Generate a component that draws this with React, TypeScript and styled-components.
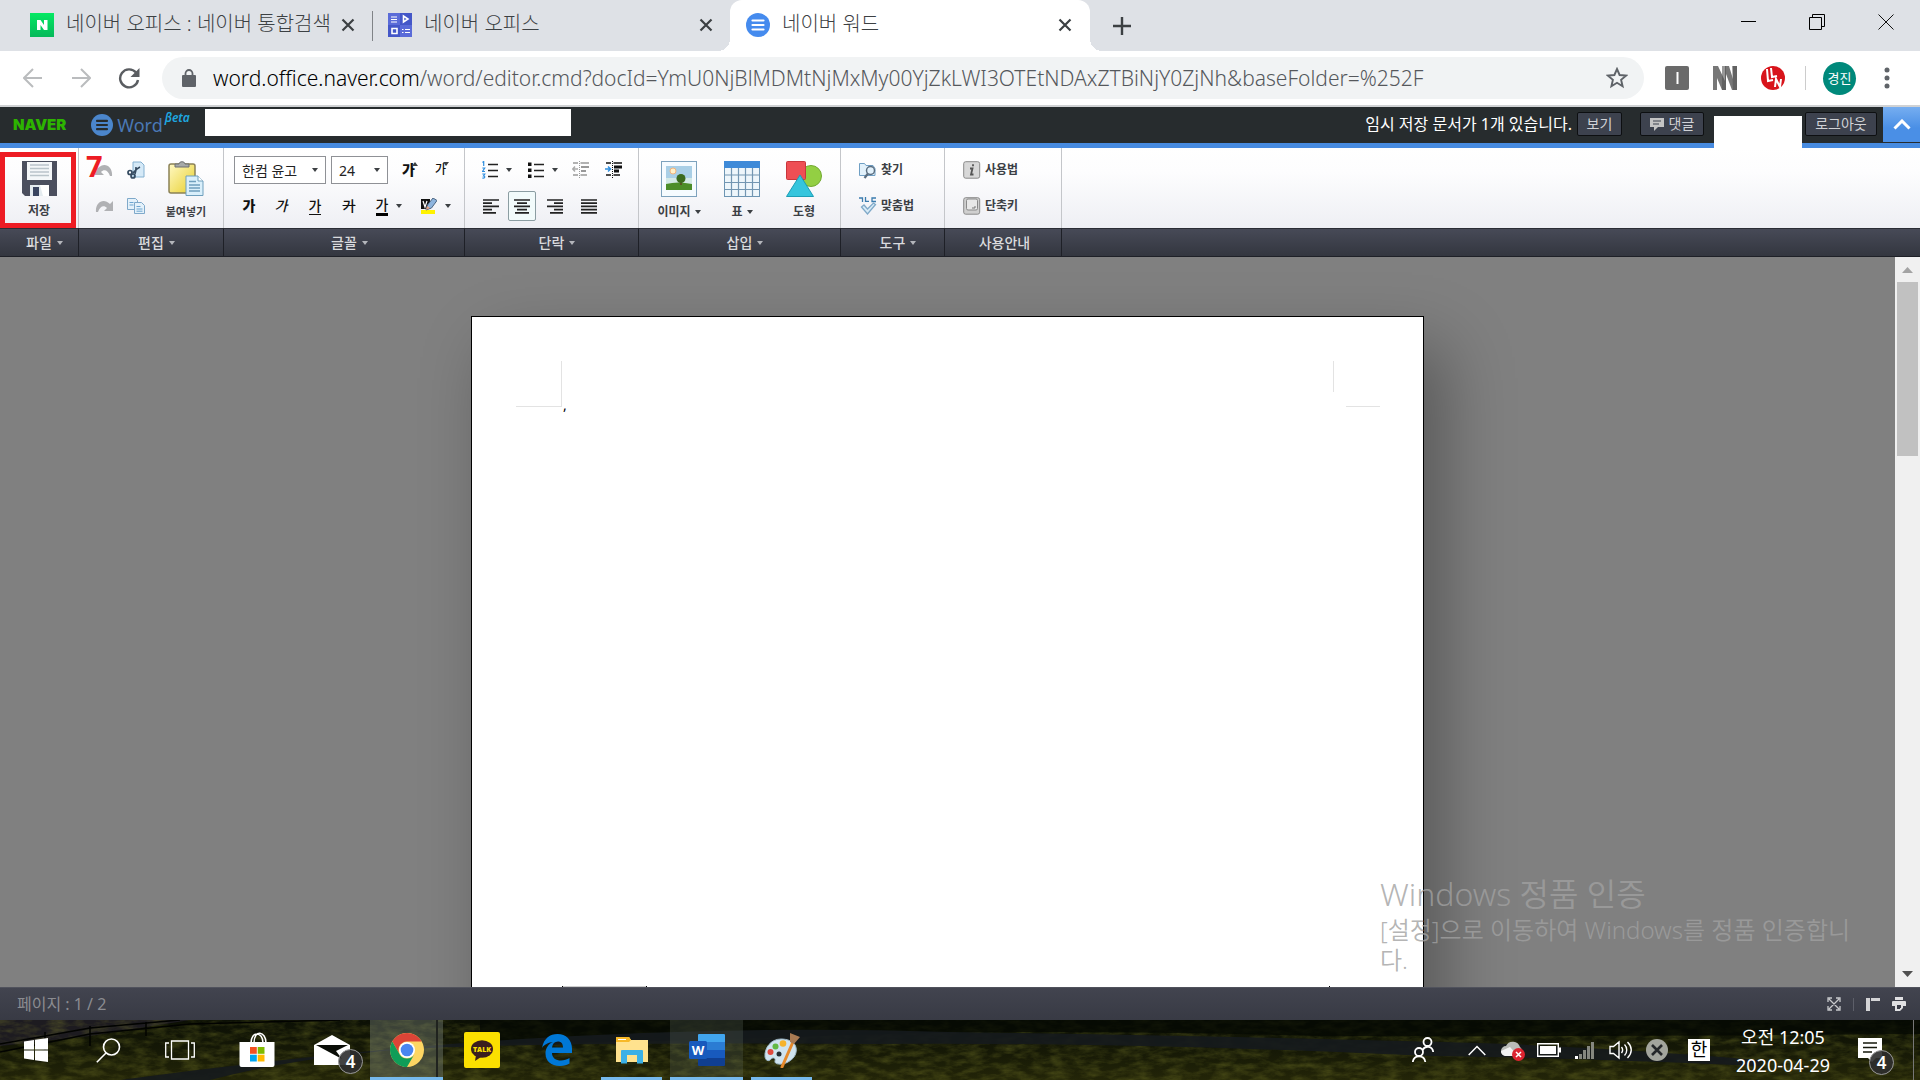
import React from 'react';
import styled, { createGlobalStyle, css } from 'styled-components';

const UI = `"Noto Sans", "Noto Sans CJK KR", sans-serif`;

const GlobalStyle = createGlobalStyle`
  *, *::before, *::after { box-sizing: border-box; }
  body { margin: 0; overflow: hidden; font-family: ${UI}; }
  button, select, input { font-family: inherit; margin: 0; }
  button { padding: 0; border: 0; background: none; color: inherit; cursor: pointer; }
  svg { display: block; flex: none; }
  a { color: inherit; text-decoration: none; }
`;

const Screen = styled.div`
  display: flex;
  flex-direction: column;
  height: 100vh;
  background: #808080;
`;

/* ---------- browser chrome ---------- */

const TabStrip = styled.header`
  display: flex;
  height: 51px;
  padding-left: 14px;
  background: #dee1e6;
`;

const TabList = styled.nav`
  display: flex;
`;

const Tab = styled.div<{ $active?: boolean; $divided?: boolean }>`
  position: relative;
  display: flex;
  align-items: center;
  width: 358px;
  padding: 0 17px 2px 16px;
  color: #3c4043;
  ${(p) => p.$divided && css`
    &::after {
      content: '';
      position: absolute;
      right: -1px;
      top: 11px;
      height: 30px;
      width: 1px;
      background: #808387;
    }
  `}
  ${(p) => p.$active && css`
    width: 360px;
    padding-right: 18px;
    background: #fff;
    border-radius: 12px 12px 0 0;
    &::before, &::after {
      content: '';
      position: absolute;
      bottom: 0;
      width: 12px;
      height: 12px;
    }
    &::before { left: -12px; background: radial-gradient(circle at 0 0, transparent 12px, #fff 12px); }
    &::after { right: -12px; background: radial-gradient(circle at 100% 0, transparent 12px, #fff 12px); }
  `}
`;

const TabTitle = styled.a`
  flex: 1;
  min-width: 0;
  margin-left: 12px;
  padding-bottom: 2px;
  overflow: hidden;
  white-space: nowrap;
  font-size: 20px;
  font-weight: 300;
  line-height: 28px;
`;

const PlainButton = styled.button<{ $w?: number }>`
  display: flex;
  align-items: center;
  justify-content: center;
  width: ${(p) => (p.$w ? `${p.$w}px` : 'auto')};
`;

const WindowButtons = styled.div`
  display: flex;
  height: 43px;
  margin-left: auto;
`;

const AddressRow = styled.div`
  display: flex;
  align-items: center;
  height: 56px;
  padding: 0 7px 0 9px;
  background: #fff;
  border-bottom: 2px solid #d0d2d4;
`;

const Omnibox = styled.div`
  flex: 1;
  display: flex;
  align-items: center;
  height: 42px;
  margin: 0 9px;
  padding: 0 16px 0 19px;
  border-radius: 21px;
  background: #f1f3f4;
`;

const Url = styled.div`
  flex: 1;
  margin-left: 16px;
  font-family: "Noto Sans", sans-serif;
  font-size: 21px;
  font-weight: 300;
  line-height: 30px;
  white-space: nowrap;
  color: #55585c;
  b { font-weight: 300; color: #000; }
`;

const Extensions = styled.div`
  display: flex;
  align-items: center;
`;

const ChromeDivider = styled.span`
  width: 1px;
  height: 24px;
  margin: 0 17px 0 8px;
  background: #ccc;
`;

const Avatar = styled.button`
  width: 33px;
  height: 33px;
  margin-right: 5px;
  border-radius: 50%;
  background: #00897b;
  color: #fff;
  font-size: 13px;
  line-height: 33px;
`;

/* ---------- editor header ---------- */

const AppBar = styled.header`
  display: flex;
  align-items: flex-start;
  height: 41px;
  background: #272c2e;
  border-bottom: 5px solid #478be0;
  position: relative;
  z-index: 1;
`;

const Brand = styled.a`
  margin-left: 13px;
  color: #2db400;
  font: 900 15px/36px "Inter", "Noto Sans", sans-serif;
`;

const WordBrand = styled.a`
  display: flex;
  align-items: center;
  height: 36px;
  margin-left: 25px;
  color: #4a78b5;
  font-size: 18px;
  span { margin-left: 4px; }
  sup {
    align-self: flex-start;
    margin-left: 2px;
    font-size: 12px;
    line-height: 22px;
    font-weight: 600;
    font-style: italic;
    color: #1ea7e0;
  }
`;

const DocTitle = styled.input`
  width: 366px;
  height: 27px;
  margin: 2px 0 0 15px;
  padding: 0 8px;
  border: 0;
  background: #fff;
  font-size: 14px;
`;

const AppBarRight = styled.div`
  display: flex;
  align-items: flex-start;
  margin-left: auto;
`;

const DraftNotice = styled.span`
  margin-right: 5px;
  color: #fff;
  font-size: 16px;
  line-height: 34px;
  white-space: nowrap;
`;

const DarkButton = styled.button<{ $w: number; $gap: number }>`
  display: flex;
  align-items: center;
  justify-content: center;
  gap: 5px;
  width: ${(p) => p.$w}px;
  height: 24px;
  margin: 5px ${(p) => p.$gap}px 0 0;
  border: 1px solid #0d0f11;
  border-radius: 2px;
  background: #3d424e;
  color: #d0d2d6;
  font-size: 14px;
  line-height: 20px;
`;

const AccountBox = styled.div`
  width: 88px;
  height: 33px;
  margin: 9px 3px 0 0;
  background: #fff;
`;

const FoldButton = styled.button`
  display: flex;
  align-items: center;
  justify-content: center;
  width: 37px;
  height: 35px;
  background: linear-gradient(#76aef0, #4a8fe6 60%);
`;

/* ---------- ribbon ---------- */

const Ribbon = styled.div`
  position: relative;
  display: flex;
  height: 109px;
`;

const Group = styled.section<{ $w?: number }>`
  display: flex;
  flex-direction: column;
  ${(p) => (p.$w ? `width: ${p.$w}px;` : 'flex: 1;')}
`;

const GroupBody = styled.div<{ $last?: boolean; $left?: number }>`
  display: flex;
  height: 80px;
  padding: 4px 0 0 ${(p) => p.$left || 0}px;
  background: linear-gradient(#fff, #fdfdfe 30%, #eeeff4);
  border-right: ${(p) => (p.$last ? 0 : 1)}px solid #c4c6ca;
`;

const GroupLabel = styled.button<{ $last?: boolean; $menu?: boolean }>`
  display: flex;
  align-items: center;
  justify-content: center;
  gap: 5px;
  height: 29px;
  width: 100%;
  padding-left: ${(p) => (p.$menu ? 11 : 3)}px;
  border-top: 1px solid #2b2d36;
  border-bottom: 1px solid #1e2027;
  border-right: ${(p) => (p.$last ? 0 : 1)}px solid #1e2027;
  background: linear-gradient(#474a57, #33363f);
  color: #dadbde;
  font-size: 14px;
  font-weight: 500;
  line-height: 20px;
`;

const Caret = styled.i<{ $color?: string }>`
  flex: none;
  width: 0;
  height: 0;
  border: 3px solid transparent;
  border-top: 4px solid ${(p) => p.$color || '#3c4043'};
  border-bottom: 0;
`;

const BigButton = styled.button<{ $w: number }>`
  display: flex;
  flex-direction: column;
  align-items: center;
  gap: 6px;
  width: ${(p) => p.$w}px;
  height: 74px;
  padding-top: 9px;
  color: #3c3f45;
  font-size: 12px;
  font-weight: 700;
  line-height: 18px;
  white-space: nowrap;
`;

const BigLabel = styled.span<{ $small?: boolean }>`
  display: flex;
  align-items: center;
  gap: 4px;
  font-size: ${(p) => (p.$small ? 11 : 12)}px;
`;

const Stack = styled.div<{ $w?: number }>`
  display: flex;
  flex-direction: column;
  width: ${(p) => (p.$w ? `${p.$w}px` : 'auto')};
`;

const ToolRow = styled.div`
  display: flex;
  align-items: center;
  height: 36px;
`;

const Tool = styled.button<{ $w: number; $on?: boolean }>`
  display: flex;
  align-items: center;
  justify-content: center;
  gap: 8px;
  width: ${(p) => p.$w}px;
  height: 30px;
  border: 1px solid ${(p) => (p.$on ? '#8b9da2' : 'transparent')};
  border-radius: 2px;
  background: ${(p) => (p.$on ? '#f2fbfb' : 'none')};
`;

const SelectBox = styled.label<{ $w: number }>`
  position: relative;
  width: ${(p) => p.$w}px;
  margin-right: 5px;
  select {
    appearance: none;
    display: block;
    width: 100%;
    height: 28px;
    padding: 0 18px 0 7px;
    border: 1px solid #8f9196;
    border-radius: 0;
    background: #fff;
    color: #222;
    font-size: 14px;
  }
  i { position: absolute; right: 8px; top: 12px; }
`;

const Glyph = styled.span<{ $kind?: string }>`
  color: #111;
  font-size: ${(p) => (p.$kind === 'small' ? 12 : 14)}px;
  line-height: 16px;
  font-weight: ${(p) => (p.$kind === 'bold' ? 900 : 500)};
  ${(p) => p.$kind === 'italic' && 'font-style: italic;'}
  ${(p) => p.$kind === 'under' && 'border-bottom: 1px solid #111;'}
  ${(p) => p.$kind === 'strike' && 'text-decoration: line-through;'}
  ${(p) => p.$kind === 'color' && 'border-bottom: 3px solid #000;'}
`;

const Sized = styled.span`
  display: flex;
  align-items: center;
  i { align-self: flex-start; margin-left: -3px; }
`;

const CaretUp = styled(Caret)`
  transform: rotate(180deg);
`;

const ToolLink = styled.button`
  display: flex;
  align-items: center;
  gap: 4px;
  height: 36px;
  color: #3c3f45;
  font-size: 12px;
  font-weight: 700;
  line-height: 18px;
`;

const SaveHighlight = styled.div`
  position: absolute;
  left: 0;
  top: 4px;
  width: 76px;
  height: 76px;
  border: 5px solid #ed1c24;
  pointer-events: none;
`;

const StepNumber = styled.span`
  position: absolute;
  left: 86px;
  top: 2px;
  color: #ed1c24;
  font-size: 29px;
  font-weight: 700;
  line-height: 32px;
`;

/* ---------- document ---------- */

const Workspace = styled.main`
  position: relative;
  display: flex;
  flex: 1;
  min-height: 0;
  overflow: hidden;
`;

const Canvas = styled.div`
  flex: 1;
  overflow: hidden;
  padding-top: 59px;
`;

const Paper = styled.article`
  position: relative;
  width: 953px;
  height: 1347px;
  margin: 0 auto;
  padding: 80px 91px;
  border: 1px solid #000;
  background: #fff;
  box-shadow: 20px 30px 65px rgba(0, 0, 0, 0.32);
  font-size: 14px;
  line-height: 16px;
`;

const Mark = styled.span<{ $x: number; $y: number; $w: number; $h: number; $c?: string }>`
  position: absolute;
  left: ${(p) => p.$x}px;
  top: ${(p) => p.$y}px;
  width: ${(p) => p.$w}px;
  height: ${(p) => p.$h}px;
  background: ${(p) => p.$c || '#e3e3e3'};
`;

const Scrollbar = styled.div`
  display: flex;
  flex-direction: column;
  align-items: center;
  width: 25px;
  background: #f0f0f0;
`;

const ScrollThumb = styled.div`
  width: 21px;
  height: 174px;
  margin-bottom: auto;
  background: #c1c1c1;
`;

const Watermark = styled.aside`
  position: absolute;
  right: 70px;
  bottom: 12px;
  width: 470px;
  color: rgba(161, 161, 161, 0.8);
  white-space: nowrap;
  pointer-events: none;
  h2 { margin: 0; font-size: 32px; font-weight: 350; line-height: 42px; }
  p { margin: 0; font-size: 24px; font-weight: 350; line-height: 30px; }
`;

const StatusBar = styled.footer`
  display: flex;
  align-items: center;
  height: 33px;
  padding: 0 14px 0 17px;
  border-top: 1px solid #50525c;
  background: linear-gradient(#42444f, #383a44);
  color: #8b8c91;
  font-size: 16px;
  line-height: 22px;
`;

const StatusTools = styled.div`
  display: flex;
  align-items: center;
  gap: 12px;
  margin-left: auto;
`;

const StatusDivider = styled.span`
  width: 1px;
  height: 13px;
  background: #5d5f69;
`;

/* ---------- taskbar ---------- */

const Taskbar = styled.nav`
  position: relative;
  display: flex;
  height: 60px;
  background: #0c0e06;
  color: #fff;
`;

const Wallpaper = styled.svg`
  position: absolute;
  inset: 0;
  width: 100%;
  height: 100%;
`;

const StartArea = styled.div`
  position: relative;
  display: flex;
  margin-right: 4px;
`;

const Pinned = styled.div`
  position: relative;
  display: flex;
  gap: 2px;
`;

const TaskButton = styled.button<{ $w?: number; $line?: 'short' | 'full'; $lit?: string }>`
  position: relative;
  display: flex;
  align-items: center;
  justify-content: center;
  width: ${(p) => p.$w || 73}px;
  background: ${(p) => p.$lit || 'none'};
  ${(p) => p.$line && css`
    &::after {
      content: '';
      position: absolute;
      bottom: 0;
      left: ${p.$line === 'full' ? 0 : 6}px;
      right: ${p.$line === 'full' ? 0 : 6}px;
      height: 3px;
      background: #76b9ed;
    }
  `}
`;

const StackEdge = styled.span`
  position: absolute;
  top: 0;
  bottom: 0;
  right: 5px;
  width: 2px;
  background: #20231f;
`;

const Badge = styled.span<{ $x: number; $y: number }>`
  position: absolute;
  left: ${(p) => p.$x}px;
  top: ${(p) => p.$y}px;
  width: 25px;
  height: 25px;
  border: 1px solid #999;
  border-radius: 50%;
  background: rgba(45, 45, 45, 0.9);
  color: #fff;
  font-size: 17px;
  font-weight: 600;
  line-height: 23px;
  text-align: center;
`;

const Tray = styled.div`
  position: relative;
  display: flex;
  margin-left: auto;
`;

const Clock = styled.button`
  width: 120px;
  padding-top: 2px;
  color: #fff;
  font-size: 18px;
  line-height: 28px;
  text-align: center;
  time { display: block; }
`;

const Language = styled.span`
  width: 22px;
  height: 22px;
  background: #fff;
  color: #000;
  font-size: 18px;
  line-height: 21px;
`;

const ShowDesktop = styled.button`
  width: 7px;
  border-left: 1px solid #777;
`;

/* ---------- icons ---------- */

const Cross = () => (
  <svg width="14" height="14" viewBox="0 0 14 14" stroke="#3c4043" strokeWidth="2.2"><path d="M1.5 1.5l11 11M12.5 1.5l-11 11" /></svg>
);

const WordMark = ({ size, bg, fg }: { size: number; bg: string; fg: string }) => (
  <svg width={size} height={size} viewBox="0 0 24 24"><circle cx="12" cy="12" r="12" fill={bg} /><path d="M6.500 7.500h11M6.500 12h11M6.500 16.500h11" stroke={fg} strokeWidth="2.200" strokeLinecap="round" /></svg>
);

const Floppy = () => (
  <svg width="35" height="35" viewBox="0 0 35 35">
    <path d="M0 0h35v35H3l-3-3z" fill="#4b4f5e" />
    <path d="M5 1h25v18H5z" fill="#f4f7f9" />
    <path d="M8 4h19M8 7.500h19M8 11h19M8 14.500h19" stroke="#b9c4ca" strokeWidth="1.500" />
    <path d="M8 24h19v11H8z" fill="#e4ebef" /><path d="M11 26h6v9h-6z" fill="#3a4560" />
    <path d="M18 24h9v11h-6z" fill="#fff" />
  </svg>
);

const Curl = ({ flip }: { flip?: boolean }) => (
  <svg width="18" height="14" viewBox="0 0 18 14" fill="#b0b1b4">
    <path transform={flip ? 'matrix(-1 0 0 1 18 0)' : undefined} d="M0 2v10h9L6 9c3-3 7-2 9 4h2C18 4 10-2 3 5z" />
  </svg>
);

const Cut = () => (
  <svg width="18" height="18" viewBox="0 0 18 18">
    <path d="M6 1h8l3 3v12H6z" fill="#d5e9f7" stroke="#84b0d0" />
    <path d="M13 6c-4 2-5 4-7 6M9 6c0 3 0 5-1 7" stroke="#344a60" strokeWidth="1.600" fill="none" />
    <g fill="none" stroke="#344a60" strokeWidth="1.700"><circle cx="3" cy="11.500" r="2" /><circle cx="6" cy="15" r="2" /></g>
  </svg>
);

const Copy = () => (
  <svg width="18" height="18" viewBox="0 0 18 18" fill="#e4f1fa" stroke="#7fa9ca">
    <path d="M.5 1.500h8l2 2v9H.5z" /><path d="M7.500 5.500h7l3 3v8h-10z" />
    <path d="M2.500 5.500h4M2.500 8h4M9.500 9.500h4M9.500 12h6M9.500 14.200h6" stroke="#6da5d0" />
  </svg>
);

const Clipboard = () => (
  <svg width="36" height="36" viewBox="0 0 36 36">
    <defs><linearGradient id="clip" x2="1" y2="1"><stop stopColor="#fff9c4" /><stop offset="1" stopColor="#e8cf2c" /></linearGradient></defs>
    <rect x="1" y="3" width="26" height="29" rx="2" fill="url(#clip)" stroke="#8b8157" strokeWidth="1.500" />
    <path d="M7 6V3h4c0-3 6-3 6 0h4v3z" fill="#a7aaa9" stroke="#6c6f70" />
    <path d="M18 15h12l5 5v14.500H18z" fill="#d9effb" stroke="#6f9fbd" />
    <path d="M30 15v5h5" fill="#fff" stroke="#6f9fbd" />
    <path d="M21 20.500h7M21 24h11M21 27h11M21 30h11" stroke="#6f9fbd" strokeWidth="1.300" />
  </svg>
);

const Listing = ({ numbered }: { numbered?: boolean }) => (
  <svg width="16" height="18" viewBox="0 0 16 18">
    {numbered
      ? <path d="M.5 1.500l1.200-1V5M.3 7h2.400L.5 10.500h2.500M.3 13h2.500L1.500 15c2 0 1.500 2.500-1.200 2" fill="none" stroke="#2f8fe0" strokeWidth="1.200" />
      : <path d="M0 1.500h3.500V5H0zM0 7.500h3.500V11H0zM0 13.500h3.500V17H0z" fill="#111" />}
    <path d="M6 3.500h10M6 9.500h10M6 15.500h10" stroke="#222" strokeWidth="1.600" />
  </svg>
);

const Indent = ({ on }: { on?: boolean }) => (
  <svg width="18" height="18" viewBox="0 0 18 18" stroke={on ? '#111' : '#999'} strokeWidth="2">
    <path d="M1 2h5M8.500 2H17M1 14h5M8.500 14H15" strokeWidth="1.500" />
    <path d="M9 6h8M9 10h5" strokeWidth={on ? 3 : 2} />
    <path d="M7.500 0v18" strokeDasharray="1 1" strokeWidth="1" />
    <path d={on ? 'M0 8h5M3 5.500L5.500 8 3 10.500' : 'M6 8H1M3 5.500L.8 8 3 10.500'} fill="none" stroke={on ? '#2f8fe0' : '#aaa'} strokeWidth="1.500" />
  </svg>
);

const Align = ({ d }: { d: string }) => (
  <svg width="16" height="15" viewBox="0 0 16 15" stroke="#222" strokeWidth="1.700"><path d={d} /></svg>
);

const Marker = () => (
  <svg width="16" height="16" viewBox="0 0 16 16">
    <path d="M0 1h9v10H0z" fill="#111" /><path d="M2 3l2 6 2-6" stroke="#fff" fill="none" strokeWidth="1.200" />
    <path d="M0 12h14v4H0z" fill="#fff200" />
    <path d="M5 12l1.500-5L12 0l4 2.500-5.500 7.500z" fill="#8db4de" stroke="#4b6480" /><path d="M5 12l1-4 3 2z" fill="#e4a080" />
  </svg>
);

const Photo = () => (
  <svg width="36" height="36" viewBox="0 0 36 36">
    <rect x=".5" y=".5" width="35" height="35" fill="#f5fbff" stroke="#7da2bd" />
    <rect x="5" y="5" width="26" height="24" fill="#a9cfe6" /><path d="M5 17h26v6H5z" fill="#d3e9e6" />
    <circle cx="12" cy="10" r="3" fill="#fff0c8" stroke="#f3b37b" />
    <path d="M5 23q12-3 26 0v6H5z" fill="#4c8d29" /><path d="M20 18v6" stroke="#5b4422" strokeWidth="1.500" /><circle cx="20" cy="17.500" r="4.500" fill="#3a6a1d" />
  </svg>
);

const Grid = () => (
  <svg width="36" height="36" viewBox="0 0 36 36">
    <rect x=".5" y=".5" width="35" height="35" fill="#eef6fb" stroke="#6d95b3" /><path d="M0 0h36v7H0z" fill="#3e8ad8" />
    <path d="M7.500 7v29M14.500 7v29M21.500 7v29M28.500 7v29M0 14h36M0 21.500h36M0 28.500h36" stroke="#7396b2" strokeWidth="1.200" />
  </svg>
);

const Shapes = () => (
  <svg width="36" height="36" viewBox="0 0 36 36">
    <circle cx="25" cy="15" r="10.500" fill="#93cf43" stroke="#72a930" />
    <rect x=".5" y=".5" width="19" height="18" rx="1" fill="#ee4f54" stroke="#c8363c" />
    <path d="M14 14l13.500 21.500H.5z" fill="#35c5dd" stroke="#1c9db5" />
  </svg>
);

const FindIcon = () => (
  <svg width="18" height="18" viewBox="0 0 18 18" fill="#e2f1fb" stroke="#6f9fc4">
    <path d="M.5 14.500v-12h5l1.500 2h7l2 3v7z" /><circle cx="11.500" cy="9.500" r="4" stroke="#5b6e80" strokeWidth="1.500" /><path d="M9 12.500L5.500 17" stroke="#5b6e80" strokeWidth="2.200" />
  </svg>
);

const SpellIcon = () => (
  <svg width="18" height="18" viewBox="0 0 18 18" fill="none" stroke="#3b7cae" strokeWidth="1.300">
    <path d="M0 1h3.500v4M6.500 0v4.300H10M17 1h-4v3.500h4" /><path d="M2.500 10l2.500-2 3.500 4 6-6 2 1.500-8 9.500z" fill="#d8ebf7" stroke="#7fa9c8" />
  </svg>
);

const InfoIcon = () => (
  <svg width="18" height="18" viewBox="0 0 18 18">
    <rect x=".7" y=".7" width="16" height="16.500" rx="2" fill="#d8d8d8" stroke="#8a8a8a" /><path d="M10 3.200v2M7 7.500h2.500L8 13.500h2.500" stroke="#555" strokeWidth="1.800" fill="none" />
  </svg>
);

const KeyIcon = () => (
  <svg width="18" height="18" viewBox="0 0 18 18" fill="#cfcfcf" stroke="#8a8a8a">
    <rect x=".7" y=".7" width="16" height="16.500" rx="2" /><rect x="3.500" y="2" width="11" height="11" rx="1.500" fill="#e8e8e8" /><path d="M9 11h3V9" stroke="#777" fill="none" />
  </svg>
);

const ALIGN = {
  left: 'M0 1h16M0 4.200h9M0 7.400h16M0 10.600h9M0 13.800h13',
  center: 'M0 1h16M3 4.200h10M0 7.400h16M3 10.600h10M1 13.800h14',
  right: 'M0 1h16M7 4.200h9M0 7.400h16M7 10.600h9M3 13.800h13',
  both: 'M0 1h16M0 4.200h16M0 7.400h16M0 10.600h16M0 13.800h16',
};

const Landscape = () => (
  <Wallpaper viewBox="0 0 1920 60" preserveAspectRatio="none" aria-hidden="true">
    <defs>
      <linearGradient id="field" x2="0" y2="1"><stop stopColor="#0c1005" /><stop offset=".5" stopColor="#151806" /><stop offset="1" stopColor="#232508" /></linearGradient>
      <filter id="grass" x="0" y="0" width="100%" height="100%">
        <feTurbulence type="fractalNoise" baseFrequency=".06 .16" numOctaves="4" seed="4" />
        <feColorMatrix values="0 0 0 0 .26  0 0 0 0 .27  0 0 0 0 .03  1.400 0 0 0 -.5" />
      </filter>
    </defs>
    <rect width="1920" height="60" fill="url(#field)" />
    <path d="M0 0h190L90 16 0 26z" fill="#1d1b20" />
    <rect width="1920" height="60" filter="url(#grass)" opacity=".45" />
    <path d="M480 0h1440v14q-330 3-600 2-280-8-500 0-160 6-340 8z" fill="#040803" opacity=".75" />
    <path d="M120 60q160-22 330-36 260-20 500-12 300 4 560 12 130 6 250 16v6q-180-8-330-10-300-14-560-12-300-2-440 4-120 6-220 32z" fill="#15191d" opacity=".9" />
    <path d="M0 32L90 14 190 4 340 0M0 24L90 8 180 0M45 12v18M90 6v20M146 2v14" stroke="#020301" strokeWidth="1.500" fill="none" />
  </Wallpaper>
);

type GroupProps = { w?: number; label?: string; left?: number; caret?: boolean; children?: React.ReactNode };

const RibbonGroup = ({ w, label, left, caret = true, children }: GroupProps) => (
  <Group $w={w}>
    <GroupBody $left={left} $last={!w}>{children}</GroupBody>
    <GroupLabel $last={!w} $menu={caret}>{label}{label && caret && <Caret $color="#b4b6bb" />}</GroupLabel>
  </Group>
);

export default function App() {
  return (
    <Screen>
      <GlobalStyle />
      <TabStrip>
        <TabList>
          <Tab $divided>
            <svg width="24" height="24" viewBox="0 0 24 24"><defs><linearGradient id="nv" x2="0" y2="1"><stop stopColor="#04e963" /><stop offset="1" stopColor="#06b85a" /></linearGradient></defs><path d="M0 0h24v24H0z" fill="url(#nv)" /><path d="M7 7h3.500l3.500 5V7h3.500v10H14l-3.500-5v5H7z" fill="#fff" /></svg>
            <TabTitle href="#">네이버 오피스 : 네이버 통합검색</TabTitle>
            <PlainButton aria-label="탭 닫기"><Cross /></PlainButton>
          </Tab>
          <Tab>
            <svg width="24" height="24" viewBox="0 0 24 24"><path d="M0 0h24v24H0z" fill="#4457c8" /><path d="M0 0h12v12H0zM12 12h12v12H12z" fill="#5a6bd8" /><path d="M3 4h6M3 6.500h6M3 9h6M14 16.500h1.500M17 16.500h5M14 19.500h1.500M17 19.500h5" stroke="#fff" strokeWidth="1.200" /><path d="M15.500 3v6l4.500-3zM4 15.500h5v5H4z" fill="none" stroke="#fff" strokeWidth="1.600" /></svg>
            <TabTitle href="#">네이버 오피스</TabTitle>
            <PlainButton aria-label="탭 닫기"><Cross /></PlainButton>
          </Tab>
          <Tab $active>
            <WordMark size={24} bg="#458bee" fg="#fff" />
            <TabTitle href="#">네이버 워드</TabTitle>
            <PlainButton aria-label="탭 닫기"><Cross /></PlainButton>
          </Tab>
        </TabList>
        <PlainButton $w={64} aria-label="새 탭"><svg width="18" height="18" viewBox="0 0 18 18" stroke="#3c4043" strokeWidth="2.400"><path d="M9 0v18M0 9h18" /></svg></PlainButton>
        <WindowButtons>
          <PlainButton $w={69} aria-label="최소화"><svg width="15" height="15" viewBox="0 0 15 15" stroke="#000"><path d="M0 7.500h15" /></svg></PlainButton>
          <PlainButton $w={68} aria-label="이전 크기로"><svg width="16" height="16" viewBox="0 0 16 16" stroke="#000" fill="none"><path d="M.5 3.500h12v12H.5zM3.500 3.500v-3h12v12h-3" /></svg></PlainButton>
          <PlainButton $w={69} aria-label="닫기"><svg width="16" height="16" viewBox="0 0 16 16" stroke="#111"><path d="M.5.5l15 15M15.500.5l-15 15" /></svg></PlainButton>
        </WindowButtons>
      </TabStrip>

      <AddressRow>
        <PlainButton $w={48} aria-label="뒤로"><svg width="20" height="20" viewBox="0 0 20 20" stroke="#babcbe" strokeWidth="2" fill="none"><path d="M19 10H2M10 1l-9 9 9 9" /></svg></PlainButton>
        <PlainButton $w={48} aria-label="앞으로"><svg width="20" height="20" viewBox="0 0 20 20" stroke="#babcbe" strokeWidth="2" fill="none"><path d="M1 10h17M10 1l9 9-9 9" /></svg></PlainButton>
        <PlainButton $w={48} aria-label="새로고침"><svg width="22" height="22" viewBox="0 0 22 22"><path d="M18 5.500A9 9 0 1 0 20 13" stroke="#5a5d61" strokeWidth="2.400" fill="none" /><path d="M21.500 1v9h-9z" fill="#5a5d61" /></svg></PlainButton>
        <Omnibox>
          <svg width="16" height="18" viewBox="0 0 16 18"><path d="M2 7h12v10H2z" fill="#5f6368" stroke="#5f6368" strokeLinejoin="round" strokeWidth="2" /><path d="M4.500 7V4.500a3.500 3.500 0 0 1 7 0V7" fill="none" stroke="#5f6368" strokeWidth="1.800" /></svg>
          <Url><b>word.office.naver.com</b>/word/editor.cmd?docId=YmU0NjBlMDMtNjMxMy00YjZkLWI3OTEtNDAxZTBiNjY0ZjNh&amp;baseFolder=%252F</Url>
          <PlainButton aria-label="북마크"><svg width="22" height="22" viewBox="0 0 22 22" fill="none" stroke="#5f6368" strokeWidth="1.900"><path d="M11 2l2.600 6 6.400.600-4.900 4.200 1.500 6.400L11 15.800l-5.600 3.400 1.500-6.400L2 8.600 8.400 8z" /></svg></PlainButton>
        </Omnibox>
        <Extensions>
          <PlainButton $w={48} aria-label="확장 프로그램 I"><svg width="24" height="24" viewBox="0 0 24 24"><rect width="24" height="24" rx="2" fill="#6a6a6a" /><path d="M12.500 6v12" stroke="#fff" strokeWidth="2" /></svg></PlainButton>
          <PlainButton $w={48} aria-label="확장 프로그램 N"><svg width="24" height="24" viewBox="0 0 24 24"><path d="M0 0h5l7 15V0h4l4 13V0h4v24h-5L13 8v16H9L4 12v12H0z" fill="#777" /><path d="M9 0h4v24H9zM19 0h5v24h-4z" fill="#555" opacity=".6" /></svg></PlainButton>
          <PlainButton $w={48} aria-label="확장 프로그램 LN"><svg width="24" height="24" viewBox="0 0 24 24"><circle cx="12" cy="12" r="12" fill="#d8141b" /><path d="M6 3l1 12 5-1M10 2l1 9 5-1" stroke="#fff" strokeWidth="2" fill="none" /><path d="M14 21l1-8 4 8 1-8" stroke="#fff" strokeWidth="2" fill="none" /></svg></PlainButton>
          <ChromeDivider />
          <Avatar>경진</Avatar>
          <PlainButton $w={52} aria-label="메뉴"><svg width="6" height="24" viewBox="0 0 6 24" fill="#5f6368"><circle cx="3" cy="4" r="2.500" /><circle cx="3" cy="12" r="2.500" /><circle cx="3" cy="20" r="2.500" /></svg></PlainButton>
        </Extensions>
      </AddressRow>

      <AppBar>
        <Brand href="#">NAVER</Brand>
        <WordBrand href="#"><WordMark size={22} bg="#4b86cc" fg="#272c2e" /><span>Word</span><sup>βeta</sup></WordBrand>
        <DocTitle aria-label="문서 제목" />
        <AppBarRight>
          <DraftNotice>임시 저장 문서가 1개 있습니다.</DraftNotice>
          <DarkButton $w={45} $gap={18}>보기</DarkButton>
          <DarkButton $w={64} $gap={10}>
            <svg width="14" height="13" viewBox="0 0 14 13"><path d="M0 0h14v9H8l-4 4V9H0z" fill="#c4c4c4" /><path d="M3 3h8M3 6h6" stroke="#3d424e" /></svg>댓글
          </DarkButton>
          <AccountBox />
          <DarkButton $w={72} $gap={6}>로그아웃</DarkButton>
          <FoldButton aria-label="메뉴 접기"><svg width="18" height="11" viewBox="0 0 18 11"><path d="M1.500 9.500L9 2l7.500 7.500" stroke="#fff" strokeWidth="3" fill="none" /></svg></FoldButton>
        </AppBarRight>
      </AppBar>

      <Ribbon>
        <RibbonGroup w={79} label="파일">
          <BigButton $w={78}><Floppy /><BigLabel>저장</BigLabel></BigButton>
        </RibbonGroup>
        <RibbonGroup w={145} label="편집" left={9}>
          <Stack $w={32}>
            <ToolRow><Tool $w={32} aria-label="실행 취소"><Curl /></Tool></ToolRow>
            <ToolRow><Tool $w={32} aria-label="다시 실행"><Curl flip /></Tool></ToolRow>
          </Stack>
          <Stack $w={32}>
            <ToolRow><Tool $w={32} aria-label="잘라내기"><Cut /></Tool></ToolRow>
            <ToolRow><Tool $w={32} aria-label="복사"><Copy /></Tool></ToolRow>
          </Stack>
          <BigButton $w={68}><Clipboard /><BigLabel $small>붙여넣기</BigLabel></BigButton>
        </RibbonGroup>
        <RibbonGroup w={241} label="글꼴" left={10}>
          <Stack>
            <ToolRow>
              <SelectBox $w={92}><select aria-label="글꼴"><option>한컴 윤고</option></select><Caret /></SelectBox>
              <SelectBox $w={57}><select aria-label="글자 크기"><option>24</option></select><Caret /></SelectBox>
              <Tool $w={34} aria-label="글자 크게"><Sized><Glyph $kind="bold">가</Glyph><CaretUp /></Sized></Tool>
              <Tool $w={30} aria-label="글자 작게"><Sized><Glyph $kind="small">가</Glyph><Caret /></Sized></Tool>
            </ToolRow>
            <ToolRow>
              <Tool $w={30} aria-label="굵게"><Glyph $kind="bold">가</Glyph></Tool>
              <Tool $w={34} aria-label="기울임"><Glyph $kind="italic">가</Glyph></Tool>
              <Tool $w={34} aria-label="밑줄"><Glyph $kind="under">가</Glyph></Tool>
              <Tool $w={34} aria-label="취소선"><Glyph $kind="strike">가</Glyph></Tool>
              <Tool $w={46} aria-label="글자 색"><Glyph $kind="color">가</Glyph><Caret /></Tool>
              <Tool $w={48} aria-label="강조 색"><Marker /><Caret /></Tool>
            </ToolRow>
          </Stack>
        </RibbonGroup>
        <RibbonGroup w={174} label="단락" left={9}>
          <Stack>
            <ToolRow>
              <Tool $w={46} aria-label="번호 매기기"><Listing numbered /><Caret /></Tool>
              <Tool $w={46} aria-label="글머리 기호"><Listing /><Caret /></Tool>
              <Tool $w={30} aria-label="내어쓰기"><Indent /></Tool>
              <Tool $w={36} aria-label="들여쓰기"><Indent on /></Tool>
            </ToolRow>
            <ToolRow>
              <Tool $w={34} aria-label="왼쪽 정렬"><Align d={ALIGN.left} /></Tool>
              <Tool $w={28} $on aria-label="가운데 정렬"><Align d={ALIGN.center} /></Tool>
              <Tool $w={38} aria-label="오른쪽 정렬"><Align d={ALIGN.right} /></Tool>
              <Tool $w={30} aria-label="양쪽 정렬"><Align d={ALIGN.both} /></Tool>
            </ToolRow>
          </Stack>
        </RibbonGroup>
        <RibbonGroup w={202} label="삽입" left={8}>
          <BigButton $w={64}><Photo /><BigLabel>이미지<Caret /></BigLabel></BigButton>
          <BigButton $w={62}><Grid /><BigLabel>표<Caret /></BigLabel></BigButton>
          <BigButton $w={62}><Shapes /><BigLabel>도형</BigLabel></BigButton>
        </RibbonGroup>
        <RibbonGroup w={104} label="도구" left={18}>
          <Stack>
            <ToolLink><FindIcon />찾기</ToolLink>
            <ToolLink><SpellIcon />맞춤법</ToolLink>
          </Stack>
        </RibbonGroup>
        <RibbonGroup w={117} label="사용안내" left={18} caret={false}>
          <Stack>
            <ToolLink><InfoIcon />사용법</ToolLink>
            <ToolLink><KeyIcon />단축키</ToolLink>
          </Stack>
        </RibbonGroup>
        <RibbonGroup />
        <SaveHighlight />
        <StepNumber>7</StepNumber>
      </Ribbon>

      <Workspace>
        <Canvas>
          <Paper>
            <Mark $x={89} $y={44} $w={1} $h={45} />
            <Mark $x={44} $y={89} $w={46} $h={1} />
            <Mark $x={861} $y={44} $w={1} $h={31} />
            <Mark $x={874} $y={89} $w={34} $h={1} />
            <Mark $x={90} $y={669} $w={84} $h={1} $c="#ccc" />
            <Mark $x={90} $y={669} $w={1} $h={20} $c="#000" />
            <Mark $x={174} $y={669} $w={1} $h={20} $c="#000" />
            <Mark $x={857} $y={669} $w={1} $h={20} $c="#000" />
            ,
          </Paper>
        </Canvas>
        <Scrollbar>
          <PlainButton $w={25} aria-label="위로"><svg width="25" height="25" viewBox="0 0 25 25"><path d="M7 16h11l-5.500-6z" fill="#a3a3a3" /></svg></PlainButton>
          <ScrollThumb />
          <PlainButton $w={25} aria-label="아래로"><svg width="25" height="25" viewBox="0 0 25 25"><path d="M7 9h11l-5.500 6z" fill="#505050" /></svg></PlainButton>
        </Scrollbar>
        <Watermark>
          <h2>Windows 정품 인증</h2>
          <p>[설정]으로 이동하여 Windows를 정품 인증합니<br />다.</p>
        </Watermark>
      </Workspace>

      <StatusBar>
        <span>페이지 : 1 / 2</span>
        <StatusTools>
          <PlainButton aria-label="전체 화면"><svg width="14" height="14" viewBox="0 0 14 14" fill="none" stroke="#c8c9cc" strokeWidth="1.300"><path d="M1 5V1h4M9 1h4v4M13 9v4H9M5 13H1V9M2 2l10 10M12 2L2 12" /></svg></PlainButton>
          <StatusDivider />
          <PlainButton aria-label="눈금자"><svg width="14" height="14" viewBox="0 0 14 14" fill="#d4d4d6"><path d="M0 1h4v13H0zM5 1h9v3H5z" /></svg></PlainButton>
          <PlainButton aria-label="인쇄"><svg width="14" height="14" viewBox="0 0 14 14" fill="#e0e0e2"><path d="M3 0h8v3H3zM1 4h12a1 1 0 0 1 1 1v4h-3v2l-3 3H3V9H0V5a1 1 0 0 1 1-1z" /><path d="M5 8h4v3H8v1H5z" fill="#3b3d48" /></svg></PlainButton>
        </StatusTools>
      </StatusBar>

      <Taskbar>
        <Landscape />
        <StartArea>
          <TaskButton $w={72} aria-label="시작"><svg width="24" height="24" viewBox="0 0 24 24" fill="#fff"><path d="M0 3.400L10 2v9.500H0zM11 1.800L24 0v11.500H11zM0 12.500h10V22L0 20.600zM11 12.500h13V24l-13-1.800z" /></svg></TaskButton>
          <TaskButton $w={72} aria-label="검색"><svg width="25" height="25" viewBox="0 0 25 25" fill="none" stroke="#fff" strokeWidth="1.600"><circle cx="15.500" cy="9" r="8" /><path d="M10 15L.8 24.200" /></svg></TaskButton>
          <TaskButton $w={72} aria-label="작업 보기"><svg width="30" height="20" viewBox="0 0 30 20" fill="none" stroke="#fff" strokeWidth="1.300"><path d="M6.500 1h17v18h-17zM4 3H.7v14H4M26 3h3.300v14H26" /></svg></TaskButton>
        </StartArea>
        <Pinned>
          <TaskButton aria-label="스토어"><svg width="36" height="36" viewBox="0 0 36 36"><path d="M12 11c0-12 12-12 12 0M15 11c0-14 12-12 12 0" stroke="#fff" fill="none" strokeWidth="1.500" /><path d="M.5 10h35v23q0 2-2 2h-31q-2 0-2-2z" fill="#fff" /><path d="M11 15h6.800v6.800H11z" fill="#f25022" /><path d="M18.700 15h6.800v6.800h-6.800z" fill="#7fba00" /><path d="M11 22.700h6.800v6.800H11z" fill="#00a4ef" /><path d="M18.700 22.700h6.800v6.800h-6.800z" fill="#ffb900" /></svg></TaskButton>
          <TaskButton aria-label="메일"><svg width="36" height="30" viewBox="0 0 36 30"><path d="M0 10L18 0l18 10v20H0z" fill="#fff" /><path d="M2 10h32l-12 6 6 8z" fill="#0a0d07" /></svg><Badge $x={43} $y={29}>4</Badge></TaskButton>
          <TaskButton $line="full" $lit="rgba(130,140,130,.4)" aria-label="Chrome"><svg width="34" height="34" viewBox="0 0 34 34"><circle cx="17" cy="17" r="17" fill="#fdd663" /><path d="M2.300 8.500A17 17 0 0 1 31.700 8.500H17a8.500 8.500 0 0 0-7.400 12.700z" fill="#dc4437" /><path d="M2.300 8.500A17 17 0 0 0 17 34l7.400-12.800a8.500 8.500 0 0 1-14.800 0z" fill="#109d58" /><circle cx="17" cy="17" r="8" fill="#fff" /><circle cx="17" cy="17" r="6.300" fill="#4a86f0" /></svg><StackEdge /></TaskButton>
          <TaskButton aria-label="카카오톡"><svg width="36" height="36" viewBox="0 0 36 36"><rect width="36" height="36" rx="2" fill="#fbe000" /><ellipse cx="18" cy="17" rx="11" ry="8.800" fill="#3b1e1e" /><path d="M12 23l-1 6 6-4z" fill="#3b1e1e" /><text x="18" y="20" textAnchor="middle" fontSize="7" fontWeight="800" fill="#fbe000" fontFamily="Open Sans, sans-serif">TALK</text></svg></TaskButton>
          <TaskButton aria-label="Edge"><svg width="30" height="32" viewBox="0 0 30 32"><path d="M0 14C2 4 8 0 15.500 0 24 0 30 6 30 14.500V19H10c0 5 4 7.500 9 7.500 3 0 6-1 8.500-2.500v5.500C25 31 22 32 18 32 9 32 3.500 27 3.500 19.500 3.500 14 6.500 10 11 8 7 8.500 2.500 10 0 14zM10 13.500h11c0-4-2-6-5-6-3.500 0-5.500 2-6 6z" fill="#0078d7" /></svg></TaskButton>
          <TaskButton $line="short" aria-label="파일 탐색기"><svg width="32" height="27" viewBox="0 0 32 27"><path d="M0 1q0-1 1-1h12l2 3h17v22H0z" fill="#ffe28e" /><path d="M0 1q0-1 1-1h12l2 3-2 2H0z" fill="#f7b928" /><path d="M2 2h8v1H2z" fill="#fff" /><path d="M5 14q0-1 1-1h20q1 0 1 1v12.500h-6V18H11v8.500H5z" fill="#3bb0e6" /></svg></TaskButton>
          <TaskButton $line="full" $lit="rgba(110,120,110,.24)" aria-label="Word"><svg width="36" height="32" viewBox="0 0 36 32"><path d="M9 1q0-1 1-1h25q1 0 1 1v7H9z" fill="#41a5ee" /><path d="M9 8h27v8H9z" fill="#2b7cd3" /><path d="M9 16h27v8H9z" fill="#185abd" /><path d="M9 24h27v7q0 1-1 1H10q-1 0-1-1z" fill="#103f91" /><rect y="7" width="18" height="18" rx="1.500" fill="#185abd" /><text x="9" y="21" textAnchor="middle" fontSize="13" fontWeight="700" fill="#fff" fontFamily="Open Sans, sans-serif">W</text></svg></TaskButton>
          <TaskButton $line="short" aria-label="그림판"><svg width="36" height="36" viewBox="0 0 36 36"><path d="M17 7C7 7 0 16 1 25c1 5 5 4 6 2 2-2 5-1 4 2-1 4 8 4 13 1 8-4 10-12 7-17-2-4-8-6-14-6z" fill="#cfe3ef" stroke="#9fb9c9" /><circle cx="6.500" cy="20" r="3" fill="#e04a3f" /><circle cx="11.500" cy="14.500" r="3" fill="#62b944" /><circle cx="19" cy="11.500" r="3.300" fill="#f6b32c" /><circle cx="15" cy="22" r="2.500" fill="#222c33" /><path d="M28.500 11L18 35" stroke="#e58a2c" strokeWidth="3" strokeLinecap="round" /><path d="M26 1l10 4-6 7-4-2z" fill="#a97a52" /></svg></TaskButton>
        </Pinned>
        <Tray>
          <TaskButton $w={72} aria-label="피플"><svg width="22" height="26" viewBox="0 0 22 26" fill="none" stroke="#fff" strokeWidth="1.800"><circle cx="15.500" cy="5" r="4" /><path d="M10.500 13c3-5 10-4 10.700 2" /><circle cx="7" cy="15" r="4" /><path d="M.8 25c1-7.500 11.500-7.500 12.500 0" /></svg></TaskButton>
          <TaskButton $w={36} aria-label="숨겨진 아이콘"><svg width="18" height="11" viewBox="0 0 18 11" fill="none" stroke="#fff" strokeWidth="1.500"><path d="M.7 10L9 1.500l8.300 8.500" /></svg></TaskButton>
          <TaskButton $w={36} aria-label="OneDrive"><svg width="24" height="21" viewBox="0 0 24 21"><path d="M5 16a5 5 0 0 1 0-10 7.500 7.500 0 0 1 14 1c3 2 3 9-1 9z" fill="#b9bbb7" /><path d="M0 11l9-4 8 9H4q-4-1-4-5z" fill="#f2f2f2" /><circle cx="17.500" cy="14.500" r="6.500" fill="#dc2430" /><path d="M15 12l5 5M20 12l-5 5" stroke="#fff" strokeWidth="1.500" /></svg></TaskButton>
          <TaskButton $w={36} aria-label="배터리"><svg width="24" height="14" viewBox="0 0 24 14"><path d="M.7.700h20.600v12.600H.7z" fill="none" stroke="#fff" strokeWidth="1.400" /><path d="M3 3h16v8H3zM22 4.500h2v5h-2z" fill="#fff" /></svg></TaskButton>
          <TaskButton $w={36} aria-label="네트워크"><svg width="20" height="17" viewBox="0 0 20 17" fill="#85877f"><path d="M0 14h3v3H0z" fill="#fff" /><path d="M4 12h3v5H4zM8 8h3v9H8zM12 4h3v13h-3zM16 0h3v17h-3z" /></svg></TaskButton>
          <TaskButton $w={36} aria-label="볼륨"><svg width="24" height="20" viewBox="0 0 24 20" fill="none" stroke="#fff" strokeWidth="1.400"><path d="M1 6.500h3.500L10 2v16l-5.500-4.500H1zM12.500 7c1.500 2 1.500 4 0 6M15.500 4.500c3 3 3 8 0 11M18.500 2c5 5 5 11 0 16" /></svg></TaskButton>
          <TaskButton $w={36} aria-label="연결 끊김"><svg width="22" height="22" viewBox="0 0 22 22"><circle cx="11" cy="11" r="11" fill="#a3a59d" /><path d="M6 6l10 10M16 6L6 16" stroke="#25282a" strokeWidth="2.600" /></svg></TaskButton>
          <TaskButton $w={48} aria-label="입력 언어"><Language>한</Language></TaskButton>
          <Clock><time>오전 12:05</time><time>2020-04-29</time></Clock>
          <TaskButton $w={70} aria-label="알림 센터"><svg width="44" height="24" viewBox="0 0 44 24"><path d="M2 0h24v20h-6l-4 4-4-4H2z" fill="#fff" /><path d="M7 5h14M7 9.500h14M7 14h9" stroke="#16180c" strokeWidth="1.500" /></svg><Badge $x={26} $y={30}>4</Badge></TaskButton>
          <ShowDesktop aria-label="바탕 화면 보기" />
        </Tray>
      </Taskbar>
    </Screen>
  );
}
